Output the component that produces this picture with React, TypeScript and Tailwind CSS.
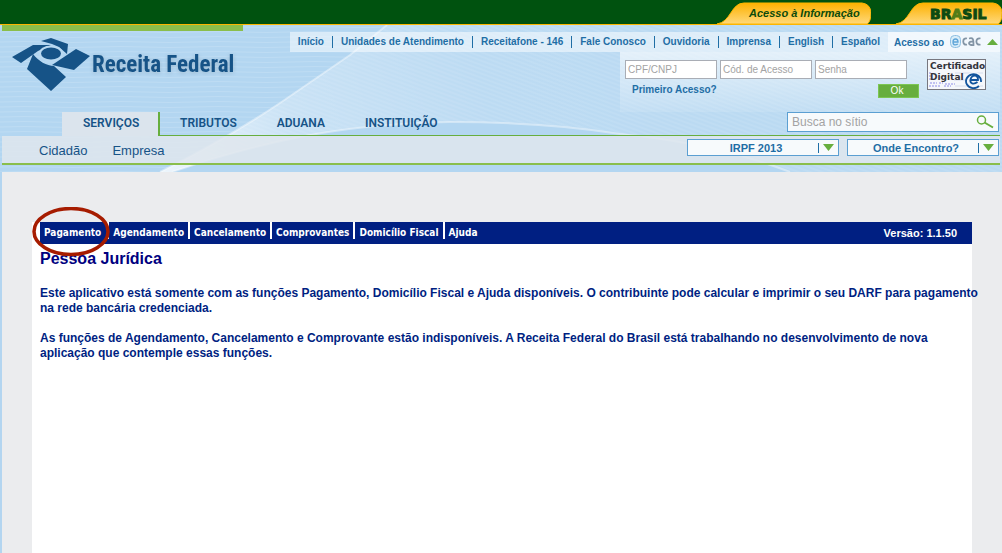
import { type ReactNode } from "react";

const topLinks = [
  "Início",
  "Unidades de Atendimento",
  "Receitafone - 146",
  "Fale Conosco",
  "Ouvidoria",
  "Imprensa",
  "English",
  "Español",
];

const menuItems = ["Agendamento", "Cancelamento", "Comprovantes", "Domicílio Fiscal", "Ajuda"];

const sweepPath =
  "M160 147 C210 122 250 98 280 78 L350 30 L387 0 H1002 V147 H790 C740 128 690 116 620 109 C560 99 500 97 450 97 C400 98 350 102 300 112 C250 122 210 134 172 147 Z";

function HeaderBackground() {
  return (
    <svg
      className="absolute inset-0 h-full w-full"
      viewBox="0 0 1002 147"
      preserveAspectRatio="none"
      aria-hidden="true"
    >
      <defs>
        <pattern id="waves" width="97" height="5" patternUnits="userSpaceOnUse">
          <path d="M0 2 Q24 1 48 2 T97 2" fill="none" stroke="#ffffff" strokeOpacity="0.14" />
        </pattern>
        <pattern id="weave" width="7" height="4" patternUnits="userSpaceOnUse" patternTransform="rotate(20)">
          <path d="M0 1H7" stroke="#ffffff" strokeOpacity="0.14" />
        </pattern>
        <linearGradient id="sweep" gradientUnits="userSpaceOnUse" x1="160" y1="147" x2="700" y2="0">
          <stop offset="0" stopColor="#ffffff" stopOpacity="0.75" />
          <stop offset="0.25" stopColor="#ffffff" stopOpacity="0.3" />
          <stop offset="0.6" stopColor="#ffffff" stopOpacity="0.12" />
          <stop offset="1" stopColor="#ffffff" stopOpacity="0.1" />
        </linearGradient>
      </defs>
      <rect width="1002" height="147" fill="#b3d6f1" />
      <path d="M0 0H387L350 30L280 78C250 98 210 122 160 147H0Z" fill="url(#waves)" />
      <path d={sweepPath} fill="url(#sweep)" />
      <path d={sweepPath} fill="url(#weave)" />
      <path
        d="M160 147 C210 122 250 98 280 78 L350 30 L387 0"
        fill="none"
        stroke="#ffffff"
        strokeOpacity="0.4"
        strokeWidth="2"
      />
      <path
        d="M172 147 C210 134 250 122 300 112 C350 102 400 98 450 97 C500 97 560 99 620 109 C690 116 740 128 790 147"
        fill="none"
        stroke="#ffffff"
        strokeOpacity="0.4"
        strokeWidth="2"
      />
    </svg>
  );
}

function Eagle() {
  return (
    <svg className="shrink-0" width="80" height="54" viewBox="0 0 80 54" aria-hidden="true">
      <g fill="#165387">
        <path d="M0 19 L21 7 L39 7 L26 13 L9 25 Z" />
        <path d="M29 3 L39 0 L56 6 L55 16 L47 9 L40 6 Z" />
        <ellipse cx="39" cy="15.500" rx="12" ry="8" fill="#b9d9f1" />
        <ellipse cx="39" cy="15.500" rx="10" ry="6" />
        <path d="M40 27 L64 11 L78 18 L62 32 Z" />
        <path d="M21 16 C26 23 35 28 42 28 L54 39 L39 53 L15 31 Z" />
      </g>
    </svg>
  );
}

function GovTab({ width, className, children }: { width: number; className: string; children: ReactNode }) {
  return (
    <a href="#" className={`relative flex h-[22px] items-center ${className}`}>
      <svg
        className="absolute inset-0 h-full w-full"
        viewBox={`0 0 ${width} 22`}
        preserveAspectRatio="none"
        aria-hidden="true"
      >
        <defs>
          <linearGradient id={`gold${width}`} x1="0" y1="0" x2="0" y2="1">
            <stop offset="0" stopColor="#fdb100" />
            <stop offset="1" stopColor="#ffd97c" />
          </linearGradient>
        </defs>
        <path
          d={`M0 22 C14 20 14 1 27 1 H${width - 9} Q${width - 1} 2 ${width} 10 Q${width} 20 ${width - 4} 22 Z`}
          fill={`url(#gold${width})`}
          stroke="#fdb600"
        />
      </svg>
      <span className="relative">{children}</span>
    </a>
  );
}

function DropButton({ label }: { label: string }) {
  return (
    <button
      type="button"
      className="flex h-[17px] w-[152px] items-center border border-[#5b9fd2] bg-[#f7fafc] text-[11px] font-bold text-[#1f6ea5]"
    >
      <span className="flex-1 pt-px pl-[6px] text-center">{label}</span>
      <span className="h-[10px] border-l border-[#1f6ea5] pl-1" />
      <svg className="mr-1" width="11" height="7" viewBox="0 0 11 7" aria-hidden="true">
        <path d="M0 0H11L5.500 7Z" fill="#67ae3e" />
      </svg>
    </button>
  );
}

function LoginField({ label, type }: { label: string; type: string }) {
  return (
    <input
      type={type}
      aria-label={label}
      placeholder={label}
      className="h-[19px] w-[92px] border border-[#a9adb5] bg-white px-[2px] text-[10px] text-gray-700 placeholder:text-[#a3a3a3]"
    />
  );
}

function CertificateBadge() {
  return (
    <a
      href="#"
      className="relative flex h-[31px] w-[59px] flex-col overflow-hidden border border-[#77777f] bg-[#f5f7fb] pt-px pl-[2px] font-['DejaVu_Sans'] text-[9px] leading-[11px] font-bold text-[#33343c]"
    >
      <svg className="absolute inset-0" width="57" height="29" viewBox="0 0 57 29" aria-hidden="true">
        <path
          d="M1 13h3M1 16h2M1 19h3M2 23h7M11 23h4M17 24h10M1 26h12M16 26h7"
          stroke="#8d8de8"
          strokeDasharray="2 1"
        />
        <path d="M25 7h31M27 13h28M26 20h29M27 26h28" stroke="#d5dced" />
        <circle cx="46" cy="20" r="8" fill="#f5f7fb" />
        <path
          d="M42.500 20h7.500c0.500-5.500-6-6-7.500-0.500c-1 4 3 5.500 7 2.500M51 26a7.500 7 0 1 1 2-4"
          fill="none"
          stroke="#12549d"
          strokeWidth="1.800"
        />
      </svg>
      <span className="relative">Certificado</span>
      <span className="relative">Digital</span>
    </a>
  );
}

export default function App() {
  return (
    <div className="min-h-screen overflow-x-hidden bg-[#ebecee] font-['Liberation_Sans',Arial,sans-serif]">
      <div className="flex h-[25px] items-end justify-end border-b border-[#fdb600] bg-[#00520f]">
        <GovTab width={154} className="mr-[25px] w-[154px] pl-[32px] text-[11px] font-bold text-[#0b4a0c] italic">
          Acesso à Informação
        </GovTab>
        <GovTab
          width={106}
          className="w-[106px] pt-[2px] pl-[34px] font-['DejaVu_Sans'] text-[14px] font-bold text-[#0c4a12] [-webkit-text-stroke:1px_#0c4a12]"
        >
          BR<span className="text-[#527c16] [-webkit-text-stroke:1px_#527c16]">A</span>SIL
        </GovTab>
      </div>

      <header className="relative">
        <HeaderBackground />
        <div className="relative px-[2px] pb-[7px]">
          <div className="flex h-[87px] justify-between">
            <div>
              <div className="h-[6px] w-[241px] bg-[#8abe4b]" />
              <a href="#" className="mt-[7px] ml-[10px] flex items-center">
                <Eagle />
                <span className="font-['Roboto_Condensed','Liberation_Sans',sans-serif] text-[23px] font-bold whitespace-nowrap text-[#165387] drop-shadow-sm">
                  Receita Federal
                </span>
              </a>
            </div>
            <div className="flex flex-col items-end pt-[7px]">
              <nav className="flex h-[20px] items-center bg-white/50 text-[10px] font-bold whitespace-nowrap text-[#1f6ea5]">
                <div className="flex">
                  {topLinks.map((link) => (
                    <a key={link} href="#" className="border-l border-[#1f6ea5] px-[8px] leading-[12px] first:border-l-0">
                      {link}
                    </a>
                  ))}
                </div>
                <a href="#" className="flex h-full w-[112px] items-center justify-between bg-white/60 pr-[2px] pl-[6px]">
                  Acesso ao
                  <svg width="31" height="14" viewBox="0 0 31 14" aria-hidden="true">
                    <rect x="0.500" y="0.500" width="10" height="12" rx="4" fill="#d9edf9" stroke="#8ebfe2" />
                    <path d="M3 7h5c0-4-5-4-5 0s3 3 5 2" fill="none" stroke="#5fa5d8" strokeWidth="1.300" />
                    <path
                      d="M17 3.500c-5-1.500-5 7.500 0 6M19 3.500c4-1 4.500 0 4.500 6.500c-6 0.500-6-4 0-3.500M30.500 3.500c-5.500-1.500-5.500 7.500 0 6"
                      fill="none"
                      stroke="#8294a5"
                      strokeWidth="1.800"
                    />
                  </svg>
                  <svg width="11" height="6" viewBox="0 0 11 6" aria-hidden="true">
                    <path d="M0 6H11L5.500 0Z" fill="#67ae3e" />
                  </svg>
                </a>
              </nav>
              <form className="flex h-[60px] w-[380px] justify-between bg-gradient-to-b from-white/60 to-white/10 pt-[7px] pr-[14px] pl-[5px]">
                <div className="w-[294px]">
                  <div className="flex gap-[3px] pt-px">
                    <LoginField label="CPF/CNPJ" type="text" />
                    <LoginField label="Cód. de Acesso" type="text" />
                    <LoginField label="Senha" type="password" />
                  </div>
                  <div className="flex justify-between pt-[5px] pl-[7px]">
                    <a href="#" className="text-[10px] leading-[12px] font-bold text-[#1f6ea5]">
                      Primeiro Acesso?
                    </a>
                    <button
                      type="button"
                      className="h-[14px] w-[41px] border border-[#7cc653] bg-[#67ae3e] pr-[3px] text-[10px] leading-[12px] text-white"
                    >
                      Ok
                    </button>
                  </div>
                </div>
                <CertificateBadge />
              </form>
            </div>
          </div>

          <div className="flex h-[24px] items-start font-['Roboto','Liberation_Sans',sans-serif] text-[12px] font-semibold text-[#165387]">
            <a href="#" className="ml-[60px] h-[24px] w-[98px] border-r-2 border-[#67ae3e] bg-[#dbe4ed] pl-[21px] leading-[22px]">
              SERVIÇOS
            </a>
            <div className="flex h-[24px] flex-1 items-start justify-between border-b border-[#67ae3e]">
              <nav className="flex gap-[40px] pl-[20px] leading-[22px]">
                <a href="#">TRIBUTOS</a>
                <a href="#">ADUANA</a>
                <a href="#">INSTITUIÇÃO</a>
              </nav>
              <div className="mr-px flex h-[20px] w-[212px] items-center border border-[#5b9fd2] bg-[#f7fafc] pr-[4px] pl-[4px] font-['Liberation_Sans',Arial,sans-serif] font-normal">
                <input
                  type="search"
                  aria-label="Busca no sítio"
                  placeholder="Busca no sítio"
                  className="min-w-0 flex-1 bg-transparent text-[12px] text-gray-700 placeholder:text-[#a3a3a3]"
                />
                <svg width="18" height="14" viewBox="0 0 18 14" fill="none" stroke="#67ae3e" aria-hidden="true">
                  <circle cx="5.500" cy="5" r="4" strokeWidth="1.500" />
                  <path d="M8.500 7.500L17 12.500" strokeWidth="2" />
                </svg>
              </div>
            </div>
          </div>

          <div className="flex h-[29px] items-start justify-between border-b-2 border-[#8abe4b] bg-[#dfe6ed]/85 pr-px">
            <nav className="flex gap-[25px] pl-[37px] text-[13px] leading-[29px] text-[#165387]">
              <a href="#">Cidadão</a>
              <a href="#">Empresa</a>
            </nav>
            <div className="flex gap-[8px] pt-[3px]">
              <DropButton label="IRPF 2013" />
              <DropButton label="Onde Encontro?" />
            </div>
          </div>
        </div>
      </header>

      <div className="border-l-2 border-[#b3d5f0] pt-[50px] pr-[30px] pl-[30px]">
        <main className="min-h-[331px] bg-white pl-[8px]">
          <div className="flex h-[22px] items-start justify-between bg-[#001f82] pr-[15px] text-[11px] leading-[22px] font-bold text-white">
            <nav className="flex font-['DejaVu_Sans_Condensed','DejaVu_Sans',sans-serif] text-[10px]">
              <a href="#" className="relative h-[17px] pr-[6px] pl-[4px]">
                Pagamento
                <svg
                  className="absolute -top-[15px] -left-[8px] z-10"
                  width="80"
                  height="50"
                  viewBox="0 0 80 50"
                  aria-hidden="true"
                >
                  <ellipse cx="39" cy="24.500" rx="37" ry="23" fill="none" stroke="#a61c00" strokeWidth="3.500" />
                </svg>
              </a>
              {menuItems.map((item) => (
                <a key={item} href="#" className="h-[17px] border-l-2 border-white px-[4px]">
                  {item}
                </a>
              ))}
            </nav>
            <span>Versão: 1.1.50</span>
          </div>
          <h1 className="pt-[5px] text-[16px] leading-[20px] font-bold text-[#000080]">Pessoa Jurídica</h1>
          <div className="-mr-2 flex flex-col gap-[15px] pt-[17px] text-[12px] leading-[15px] font-bold text-[#001f82]">
            <p>
              Este aplicativo está somente com as funções Pagamento, Domicílio Fiscal e Ajuda disponíveis. O contribuinte
              pode calcular e imprimir o seu DARF para pagamento na rede bancária credenciada.
            </p>
            <p>
              As funções de Agendamento, Cancelamento e Comprovante estão indisponíveis. A Receita Federal do Brasil está
              trabalhando no desenvolvimento de nova aplicação que contemple essas funções.
            </p>
          </div>
        </main>
      </div>
    </div>
  );
}
